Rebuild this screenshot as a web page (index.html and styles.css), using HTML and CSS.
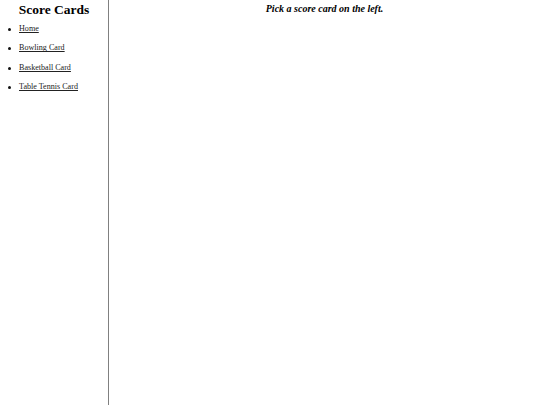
FILE: index.html
```html
<!DOCTYPE html>
<html>
<head>
<meta charset="utf-8">
<link rel="stylesheet" href="styles.css">
</head>
<body>
<div class="layout">
  <nav class="sidebar">
    <h2 class="title">Score Cards</h2>
    <ul class="menu">
      <li><a href="#">Home</a></li>
      <li><a href="#">Bowling Card</a></li>
      <li><a href="#">Basketball Card</a></li>
      <li><a href="#">Table Tennis Card</a></li>
    </ul>
  </nav>
  <main class="content">
    <p class="hint">Pick a score card on the left.</p>
  </main>
</div>
</body>
</html>
```
FILE: styles.css
```css
html, body {
  margin: 0;
  padding: 0;
  background: #fff;
}
body {
  font-family: "Liberation Serif", "Times New Roman", serif;
  color: #000;
}
.layout {
  display: flex;
  height: 405px;
}
.sidebar {
  width: 108px;
  flex: none;
  border-right: 1px solid #808080;
}
.title {
  margin: 1.5px 0 0;
  font-size: 13.5px;
  font-weight: bold;
  text-align: center;
  line-height: 15.5px;
}
.menu {
  list-style: none;
  margin: 2px 0 0;
  padding: 0 0 0 19px;
}
.menu li {
  position: relative;
  font-size: 8.1px;
  line-height: 19.4px;
}
.menu li::before {
  content: "";
  position: absolute;
  left: -11px;
  top: 9px;
  width: 3px;
  height: 3px;
  border-radius: 50%;
  background: #111;
}
.menu a {
  color: #222;
  text-decoration: underline;
}
.content {
  flex: 1;
}
.hint {
  margin: 2.6px 0 0;
  font-size: 10px;
  line-height: 11.5px;
  font-weight: bold;
  font-style: italic;
  text-align: center;
}
```
